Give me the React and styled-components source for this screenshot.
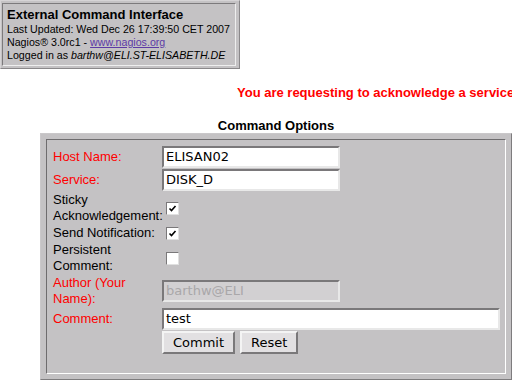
import React from "react";
import styled, { createGlobalStyle } from "styled-components";

const GlobalStyle = createGlobalStyle`
    html, body {
        margin: 0;
        padding: 0;
        background: #ffffff;
        overflow: hidden;
    }
    body {
        font-family: "Liberation Sans", Arial, sans-serif;
        color: #000;
    }
`;

const options = [
    { label: "Host Name:", required: true, kind: "text", value: "ELISAN02", width: 178 },
    { label: "Service:", required: true, kind: "text", value: "DISK_D", width: 178 },
    { label: "Sticky Acknowledgement:", kind: "check", checked: true },
    { label: "Send Notification:", kind: "check", checked: true },
    { label: "Persistent Comment:", kind: "check", checked: false },
    { label: "Author (Your Name):", required: true, kind: "text", value: "barthw@ELI", width: 178, disabled: true },
    { label: "Comment:", required: true, kind: "text", value: "test", width: 338 },
];

function CheckMark() {
    return (
        <svg width="9" height="9" viewBox="0 0 9 9">
            <polyline points="1.5,4.5 3.5,6.5 7.5,2" fill="none" stroke="#000" strokeWidth="1.6" />
        </svg>
    );
}

export default function App() {
    return (
        <Page>
            <GlobalStyle />
            <InfoBox>
                <InfoCell>
                    <InfoTitle>External Command Interface</InfoTitle>
                    <InfoLine>Last Updated: Wed Dec 26 17:39:50 CET 2007</InfoLine>
                    <InfoLine>Nagios&reg; 3.0rc1 - <InfoLink href="#">www.nagios.org</InfoLink></InfoLine>
                    <InfoLine>Logged in as <i>barthw@ELI.ST-ELISABETH.DE</i></InfoLine>
                </InfoCell>
            </InfoBox>

            <Message>You are requesting to acknowledge a service problem.</Message>

            <OptTitle>Command Options</OptTitle>
            <OptBox>
                <OptInner>
                    <OptGrid>
                        {options.map((o) => (
                            <React.Fragment key={o.label}>
                                <OptLabel $required={o.required}>{o.label}</OptLabel>
                                <OptValue>
                                    {o.kind === "text" ? (
                                        <TextField $width={o.width} $disabled={o.disabled}>{o.value}</TextField>
                                    ) : (
                                        <CheckBox>{o.checked && <CheckMark />}</CheckBox>
                                    )}
                                </OptValue>
                            </React.Fragment>
                        ))}
                        <span />
                        <Buttons>
                            <Button>Commit</Button>
                            <Button>Reset</Button>
                        </Buttons>
                    </OptGrid>
                </OptInner>
            </OptBox>
        </Page>
    );
}

const Page = styled.div`
    width: 512px;
    height: 381px;
    overflow: hidden;
`

const InfoBox = styled.div`
    width: 236px;
    height: 66px;
    padding: 1px 1px 0 1px;
    background: #c4c2c4;
    border: 1px solid;
    border-color: #d6d4d6 #8a888a #8a888a #d6d4d6;
`

const InfoCell = styled.div`
    box-sizing: border-box;
    margin-top: 1px;
    height: 63px;
    width: 234px;
    padding: 3px 0 0 4px;
    border: 1px solid;
    border-color: #7c7a7c #eeeeee #eeeeee #7c7a7c;
`

const InfoTitle = styled.div`
    font-size: 13px;
    font-weight: bold;
    line-height: 16px;
`

const InfoLine = styled.div`
    font-size: 10.67px;
    line-height: 13px;
    white-space: nowrap;
`

const InfoLink = styled.a`
    color: #5c3aa6;
    text-decoration: underline;
`

const Message = styled.div`
    margin-top: 16px;
    padding-left: 237px;
    font-size: 13px;
    font-weight: bold;
    line-height: 15px;
    color: #ff0000;
    white-space: nowrap;
`

const OptTitle = styled.div`
    margin: 18px 0 0 40px;
    width: 472px;
    text-align: center;
    font-size: 13px;
    font-weight: bold;
    line-height: 15px;
`

const OptBox = styled.div`
    box-sizing: border-box;
    margin: 0 0 0 40px;
    width: 472px;
    height: 247px;
    padding: 5px;
    background: #c4c2c4;
    border: 1px solid;
    border-color: #cac8ca #7e7c7e #7e7c7e #cac8ca;
`

const OptInner = styled.div`
    box-sizing: border-box;
    height: 235px;
    padding: 6px 6px 0 6px;
    border: 1px solid;
    border-color: #6e6c6e #ffffff #ffffff #6e6c6e;
`

const OptGrid = styled.div`
    display: grid;
    grid-template-columns: 109px 1fr;
    row-gap: 1px;
    align-items: center;
`

const OptLabel = styled.div`
    font-size: 13px;
    line-height: 16px;
    color: ${(p) => (p.$required ? "#ff0000" : "#000000")};
`

const OptValue = styled.div`
    display: flex;
    align-items: center;
    min-height: 16px;
`

const TextField = styled.div`
    box-sizing: border-box;
    width: ${(p) => p.$width}px;
    height: 22px;
    padding: 0 2px;
    border: 2px solid;
    border-color: #7a787a #e8e8e8 #e8e8e8 #7a787a;
    background: ${(p) => (p.$disabled ? "#d2d0d2" : "#ffffff")};
    color: ${(p) => (p.$disabled ? "#a9a7a9" : "#000000")};
    font-family: "DejaVu Sans", sans-serif;
    font-size: 13px;
    line-height: 18px;
    white-space: nowrap;
    overflow: hidden;
`

const CheckBox = styled.span`
    box-sizing: border-box;
    display: flex;
    align-items: center;
    justify-content: center;
    margin-left: 4px;
    width: 13px;
    height: 13px;
    background: #ffffff;
    border: 1px solid;
    border-color: #7a787a #e0e0e0 #e0e0e0 #7a787a;
`

const Buttons = styled.div`
    display: flex;
    gap: 5px;
`

const Button = styled.button`
    box-sizing: border-box;
    height: 23px;
    padding: 0 9px;
    background: #e2e0e2;
    border: 2px solid;
    border-color: #f4f4f4 #7a787a #7a787a #f4f4f4;
    font-family: "DejaVu Sans", sans-serif;
    font-size: 13px;
    color: #000;
`
